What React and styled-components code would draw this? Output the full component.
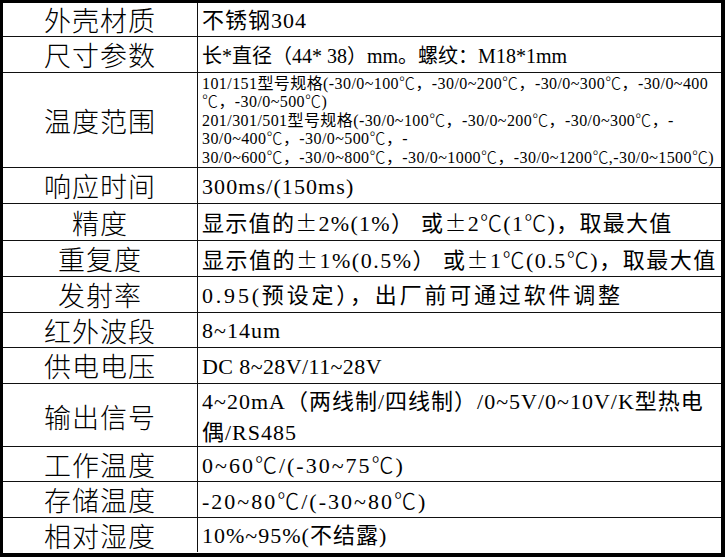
import React from 'react';
import styled, { createGlobalStyle } from 'styled-components';

const GlobalStyle = createGlobalStyle`
  html, body {
    margin: 0;
    padding: 0;
    background: #fff;
  }
  * {
    box-sizing: border-box;
  }
`;

const Table = styled.div`
  width: 725px;
  height: 557px;
  border-style: solid;
  border-color: #000;
  border-width: 3px 4px 4px 3px;
  background: #fff;
  display: flex;
  flex-direction: column;
`;

const Row = styled.div`
  display: grid;
  grid-template-columns: 195px 1fr;
  height: ${(p) => p.h}px;
  border-bottom: ${(p) => (p.last ? 'none' : '1px solid #111')};
`;

const Label = styled.div`
  display: flex;
  align-items: center;
  justify-content: center;
  border-right: 1px solid #111;
  font-family: "Noto Sans CJK SC", sans-serif;
  font-weight: 300;
  font-size: 27px;
  line-height: 1;
  letter-spacing: 1px;
  color: #000;
  white-space: nowrap;
`;

const Value = styled.div`
  --track: ${(p) => p.track || 0}px;
  display: flex;
  flex-direction: column;
  justify-content: center;
  padding: ${(p) => (p.pad === undefined ? 2 : p.pad)}px 0 0 4px;
  font-family: "Liberation Serif", "Noto Sans CJK SC", serif;
  font-size: ${(p) => p.size || 22}px;
  line-height: ${(p) => p.lh || 26}px;
  letter-spacing: var(--track);
  color: #000;
  white-space: nowrap;
`;

const Line = styled.span`
  display: block;
  height: 1lh;
`;

// full-width symbols (± and ℃) take a whole em, as in the source font
const Wide = styled.span`
  display: inline-block;
  width: 1em;
  margin-right: var(--track);
  line-height: 1;
  letter-spacing: 0;
  text-align: center;
  font-family: "Noto Sans CJK SC", sans-serif;
  font-weight: 300;
`;

const renderText = (t) =>
  t.split(/([±℃])/).map((part, i) =>
    part === '±' || part === '℃' ? <Wide key={i}>{part}</Wide> : part
  );

const rows = [
  { label: '外壳材质', h: 34, track: 1, lines: ['不锈钢304'] },
  { label: '尺寸参数', h: 36, size: 20, lines: ['长*直径（44* 38）mm。螺纹：M18*1mm'] },
  {
    label: '温度范围',
    h: 95,
    size: 16,
    lh: 18.6,
    pad: 0,
    track: 0.42,
    lines: [
      '101/151型号规格(-30/0~100℃，-30/0~200℃，-30/0~300℃，-30/0~400',
      '℃，-30/0~500℃)',
      '201/301/501型号规格(-30/0~100℃，-30/0~200℃，-30/0~300℃，-',
      '30/0~400℃，-30/0~500℃，-',
      '30/0~600℃，-30/0~800℃，-30/0~1000℃，-30/0~1200℃,-30/0~1500℃)',
    ],
  },
  { label: '响应时间', h: 36, track: 1.1, lines: ['300ms/(150ms)'] },
  { label: '精度', h: 37, track: 1.3, lines: ['显示值的±2%(1%） 或±2℃(1℃)，取最大值'] },
  { label: '重复度', h: 36, track: 1.5, lines: ['显示值的±1%(0.5%） 或±1℃(0.5℃)，取最大值'] },
  { label: '发射率', h: 36, track: 2.8, lines: ['0.95(预设定），出厂前可通过软件调整'] },
  { label: '红外波段', h: 35, track: 1, lines: ['8~14um'] },
  { label: '供电电压', h: 36, track: 0.4, lines: ['DC 8~28V/11~28V'] },
  {
    label: '输出信号',
    h: 63,
    lh: 31,
    track: 1,
    lines: ['4~20mA（两线制/四线制）/0~5V/0~10V/K型热电', '偶/RS485'],
  },
  { label: '工作温度', h: 35, track: 2, lines: ['0~60℃/(-30~75℃)'] },
  { label: '存储温度', h: 36, track: 2, lines: ['-20~80℃/(-30~80℃)'] },
  { label: '相对湿度', h: 34, track: 1, lines: ['10%~95%(不结露)'] },
];

export default function App() {
  return (
    <>
      <GlobalStyle />
      <Table>
        {rows.map((r, i) => (
          <Row key={r.label} h={r.h} last={i === rows.length - 1}>
            <Label>{r.label}</Label>
            <Value size={r.size} lh={r.lh} track={r.track} pad={r.pad}>
              {r.lines.map((t) => (
                <Line key={t}>{renderText(t)}</Line>
              ))}
            </Value>
          </Row>
        ))}
      </Table>
    </>
  );
}
